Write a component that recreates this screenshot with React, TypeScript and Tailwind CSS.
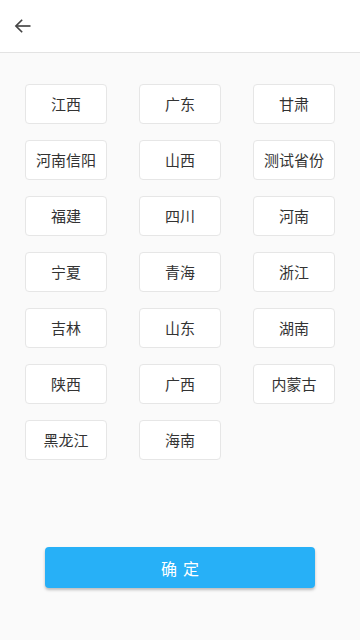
import React, { useState } from 'react';

const provinces = [
  '江西', '广东', '甘肃',
  '河南信阳', '山西', '测试省份',
  '福建', '四川', '河南',
  '宁夏', '青海', '浙江',
  '吉林', '山东', '湖南',
  '陕西', '广西', '内蒙古',
  '黑龙江', '海南',
];

const App: React.FC = () => {
  const [selected, setSelected] = useState<string | null>(null);

  return (
    <div
      className="w-[360px] h-[640px] flex flex-col bg-[#fafafa] overflow-hidden"
      style={{ fontFamily: '"Noto Sans CJK SC", "Noto Sans", Roboto, sans-serif' }}
    >
      {/* header */}
      <div className="h-[53px] shrink-0 bg-white border-b border-[#e3e3e3] flex items-center px-[12px]">
        <button className="w-[22px] h-[22px] flex items-center justify-center text-[#444]">
          <svg width="20" height="20" viewBox="0 0 24 24" fill="none" stroke="currentColor" strokeWidth="2">
            <path d="M21 12H4" />
            <path d="M11 4.5L3.5 12L11 19.5" />
          </svg>
        </button>
      </div>

      {/* province grid */}
      <div className="grid grid-cols-3 gap-x-[32px] gap-y-[16px] px-[25px] pt-[31px]">
        {provinces.map((name) => (
          <button
            key={name}
            onClick={() => setSelected(name)}
            className={`h-[40px] rounded-[4px] border bg-white text-[15px] text-[#333] flex items-center justify-center ${
              selected === name ? 'border-[#29b0f6]' : 'border-[#e6e6e6]'
            }`}
          >
            {name}
          </button>
        ))}
      </div>

      <div className="flex-1" />

      {/* confirm */}
      <div className="px-[45px] pb-[52px]">
        <button className="w-[270px] h-[41px] rounded-[4px] bg-[#27b0f7] text-white text-[16px] tracking-[6px] pl-[6px] shadow-[0_2px_3px_rgba(0,0,0,0.25)]">
          确定
        </button>
      </div>
    </div>
  );
};

export default App;
